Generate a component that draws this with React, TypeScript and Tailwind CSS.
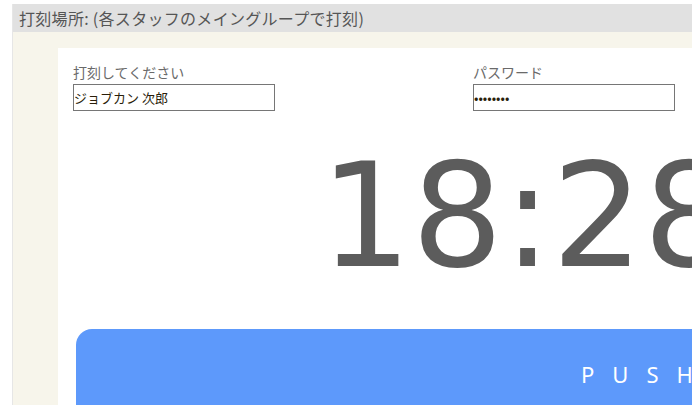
import { useState } from 'react';

const App = () => {
  const [name, setName] = useState("ジョブカン 次郎");
  const [password, setPassword] = useState("password");

  return (
    <div className="w-[692px] h-[405px] overflow-hidden bg-white pt-1 pl-[12px]">
      <div className="border-l border-[#e6e6e6] h-full w-[1400px]">
        <div
          className="h-[28px] bg-[#e1e1e1] pl-[6px] text-[16px] leading-[28px] tracking-[0.3px] text-[#555555]"
          style={{ fontFamily: '"Noto Sans CJK JP", "Noto Sans", sans-serif' }}
        >
          打刻場所: (各スタッフのメイングループで打刻)
        </div>
        <div className="bg-[#f7f5eb] h-full pt-4 pl-[45px]">
          <div className="bg-white w-[1300px] h-full pl-[15px] pt-[14px]">
            <div
              className="flex"
              style={{ fontFamily: '"Noto Sans CJK JP", "Noto Sans", sans-serif' }}
            >
              <div className="w-[400px] flex flex-col">
                <label className="text-[14px] leading-[20px] text-[#6a6a6a]">打刻してください</label>
                <input
                  value={name}
                  onChange={(e) => setName(e.target.value)}
                  className="mt-[2px] w-[202px] h-[27px] border border-[#767676] px-0 text-[13px] text-[#2a1e0a] outline-none"
                />
              </div>
              <div className="w-[400px] flex flex-col">
                <label className="text-[14px] leading-[20px] text-[#6a6a6a]">パスワード</label>
                <input
                  type="password"
                  value={password}
                  onChange={(e) => setPassword(e.target.value)}
                  className="mt-[2px] w-[202px] h-[27px] border border-[#767676] px-0 text-[13px] text-[#2a1e0a] outline-none"
                />
              </div>
            </div>
            <div
              className="mt-[33px] pl-[247px] text-[144px] leading-[144px] text-[#5c5c5c]"
              style={{ fontFamily: '"DejaVu Sans", Verdana, sans-serif' }}
            >
              18:28
            </div>
            <div className="mt-[41px] ml-[3px] w-[1200px]">
              <button
                className="flex items-start w-full rounded-[16px] bg-[#5d99fb] pl-[505px] pt-[30px] pb-[60px]"
                style={{ fontFamily: '"Noto Sans", sans-serif' }}
              >
                <span className="block text-[22px] leading-[30px] tracking-[18px] text-white">PUSH</span>
              </button>
            </div>
          </div>
        </div>
      </div>
    </div>
  );
};

export default App;
